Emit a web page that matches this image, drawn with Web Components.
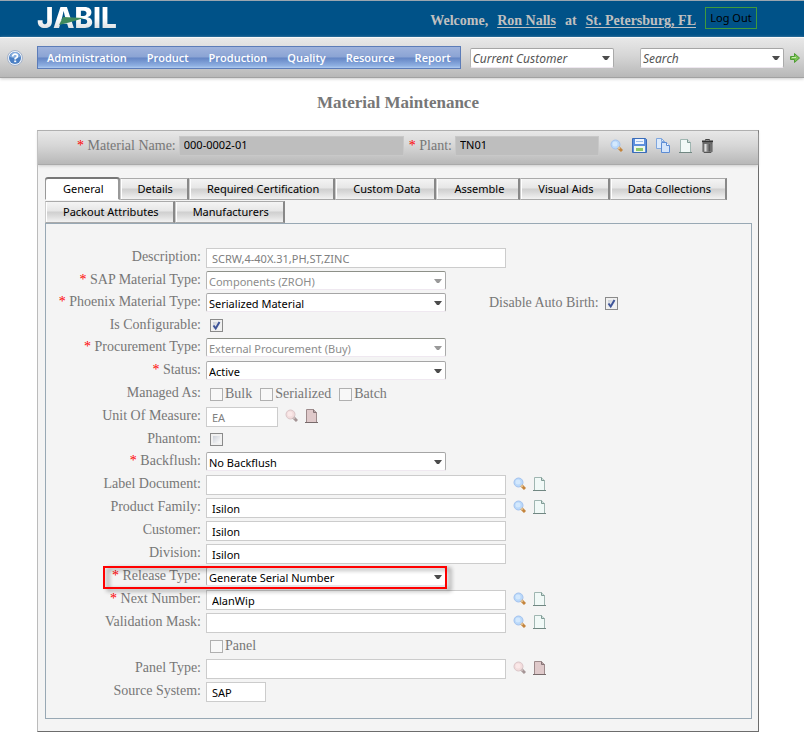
<!DOCTYPE html>
<html lang="en">
<head>
<meta charset="utf-8">
<title>Material Maintenance</title>
<style>
  body {
    margin: 0;
    background: #fff;
    color: #777;
    font: 14px/20px "Liberation Serif", serif;
    --ui: "Noto Sans", sans-serif;
    --bar: linear-gradient(#e8e8e8, #d6d6d6 45%, #b8b8b8);
  }
</style>
</head>
<body>
<material-page></material-page>

<script>
const ICONS = {
  search: `<circle cx="5.5" cy="5.5" r="4.5" fill="#b9d8fa" stroke="#a3c2ee"/><circle cx="5" cy="5" r="2.5" fill="#d3e8fd"/><path d="M8.5 8.5l3.500 3.500" stroke="#c4843c" stroke-width="3"/><path d="M8.200 8.200l1.500 1.500" stroke="#e4c79a" stroke-width="2"/>`,
  searchoff: `<circle cx="5.500" cy="5.500" r="4.500" fill="#f2dcdc" stroke="#dac5c8"/><circle cx="5" cy="5" r="2.500" fill="#fae8e8"/><path d="M8.500 8.500l3.500 3.500" stroke="#a59596" stroke-width="3"/><path d="M8.200 8.200l1.500 1.500" stroke="#d0c2c2" stroke-width="2"/>`,
  page: `<path d="M1.500 .5h7l3 3v10h-10z" fill="#f1f9f7" stroke="#9fb6b1"/><path d="M8.500 .5v3h3" fill="#cfe0dc" stroke="#7f9a94"/><path d="M0 13.500h13" stroke="#718782"/>`,
  pageoff: `<path d="M1.500 .5h7l3 3v10h-10z" fill="#dfc9ca" stroke="#9d8a8b"/><path d="M8.500 .5v3h3" fill="#b9a5a6" stroke="#857476"/><path d="M0 13.500h13" stroke="#776a6b"/>`,
  save: `<path d="M.5 .5h13l1 1v13h-14z" fill="#5d8fdc" stroke="#3a6cb8"/><path d="M3 1h9v5H3z" fill="#eef5ff"/><path d="M4 3.500h7" stroke="#9dbde8"/><path d="M2 8h11v6H2z" fill="#eef6ea"/><path d="M4 10h7v3H4z" fill="#8dc76a"/>`,
  copy: `<path d="M.5 .5h5l3 3v7h-8z" fill="#dceafb" stroke="#7fa6de"/><path d="M5.500 .5v3h3" fill="none" stroke="#7fa6de"/><path d="M5.500 4.500h5l3 3v7h-8z" fill="#d3e4fa" stroke="#5c8cd4"/><path d="M10.500 4.500v3h3" fill="#fff" stroke="#5c8cd4"/>`,
  trash: `<path d="M2 4h9v8.500l-1 1H3l-1-1z" fill="#888" stroke="#555"/><path d="M4.500 5v7.500" stroke="#ddd" stroke-width="2"/><path d="M8.500 5v7.500" stroke="#555" stroke-width="2"/><path d="M1 2.500h11" stroke="#333" stroke-width="2"/><path d="M4.500 1.500v-1h4v1" fill="none" stroke="#444"/>`,
  help: `<circle cx="8" cy="8" r="7.500" fill="#eef2f8" stroke="#a3b2ca"/><circle cx="8" cy="8" r="6" fill="#4a7fc4"/><path d="M3 7a5 5 0 0 1 10 0q-5 2-10 0" fill="#86aee0"/><path d="M5.700 6.500q0-2.300 2.400-2.300t2.300 2q0 1.300-2.200 2.300v1" fill="none" stroke="#fff" stroke-width="1.700"/><path d="M7.200 10.500h2v1.700h-2z" fill="#fff"/>`,
  go: `<path d="M.5 3.500h4v-3l5 4.500-5 4.500v-3h-4z" fill="#7cc455" stroke="#4f9c34"/><path d="M2 4.500h4" stroke="#c7ecb0"/>`
};
const SIZES = { save: [15, 15], copy: [14, 15], help: [16, 16], go: [10, 10] };
let nextId = 0;

function define(name, render) {
  customElements.define(name, class extends HTMLElement {
    connectedCallback() {
      if (this.shadowRoot) return;
      const t = document.createElement("template");
      t.innerHTML = render(this, k => this.getAttribute(k) || "", k => this.hasAttribute(k));
      this.attachShadow({ mode: "open" }).append(t.content.cloneNode(true));
    }
  });
}

const CHECK_CSS = `
  input[type=checkbox] { appearance: none; flex: none; box-sizing: border-box; width: 13px; height: 13px; margin: 0;
    border: 1px solid #8a8a8a; background: linear-gradient(135deg, #ccd0d8, #fafafa) content-box, #f0f0f0; padding: 2px; }
  input[type=checkbox]:disabled { border-color: #b0b0b0; background: #f8f8f8; }
  .box { display: grid; flex: none; }
  .box > * { grid-area: 1 / 1; }
  .box svg { pointer-events: none; z-index: 1; }`;
const checkBox = (id, on, off) => `<span class="box"><input type="checkbox" id="${id}" ${on ? "checked" : ""} ${off ? "disabled" : ""}>${on ? `<svg width="13" height="13" viewBox="0 0 13 13"><path d="M3.500 6.500l2.200 3 3.800-6.500" fill="none" stroke="#3f5599" stroke-width="2"/></svg>` : ""}</span>`;

const SELECT_CSS = `
  .combo { display: grid; box-sizing: border-box; height: 19px; background: #fff; align-items: center;
    border: 1px solid; border-color: #a5a5a5 #aaa #efe8f0 #b5b5b5; border-radius: 2px; }
  .combo > * { grid-area: 1 / 1; }
  .combo select, .combo input { appearance: none; border: 0; background: none; margin: 0; padding: 2px 18px 0 2px; height: 18px;
    width: 100%; min-width: 0; box-sizing: border-box; font: inherit; color: inherit; outline: 0; opacity: 1; }
  .combo svg { justify-self: end; margin-right: 3px; pointer-events: none; color: #4c4c4c; }`;
const ARROW = `<svg width="8" height="4" viewBox="0 0 8 4"><path d="M0 0h8L5 4H3z" fill="currentColor"/></svg>`;

define("icon-button", (el, a) => {
  const n = a("name"), [w, h] = SIZES[n] || [13, 14];
  return `<style>
    :host { display: inline-flex; flex: none; }
    button { display: flex; border: 0; padding: 0; margin: 0; background: none; }
    svg { display: block; }
  </style><button type="button" aria-label="${a("label")}"><svg width="${w}" height="${h}" viewBox="0 0 ${w} ${h}">${ICONS[n]}</svg></button>`;
});

define("check-field", (el, a, has) => {
  const id = "c" + nextId++;
  return `<style>
    :host { display: inline-flex; align-items: center; gap: 2px; height: 20px; }
    ${CHECK_CSS}
    :host([before]) { flex-direction: row-reverse; gap: 6px; }
  </style>${checkBox(id, has("checked"), has("disabled"))}<label for="${id}"><slot></slot></label>`;
});

define("top-combo", (el, a, has) => {
  const id = "t" + nextId++;
  return `<style>
    :host { display: block; flex: none; width: 144px; font: italic 12px/16px var(--ui); color: #555; }
    ${SELECT_CSS}
    .combo { height: 20px; }
    .combo input::placeholder { color: #555; opacity: 1; }
  </style><div class="combo">${has("search")
    ? `<input id="${id}" type="text" placeholder="${a("label")}" aria-label="${a("label")}">`
    : `<select id="${id}" aria-label="${a("label")}"><option>${a("label")}</option></select>`}${ARROW}</div>`;
});

define("form-row", (el, a, has) => {
  const id = "f" + nextId++, type = a("type"), off = has("disabled");
  let control = "";
  if (type === "text") control = `<input class="text ${a("size")}" id="${id}" type="text" value="${a("value")}" ${off ? "disabled" : ""}>`;
  if (type === "select") control = `<div class="combo"><select id="${id}" ${off ? "disabled" : ""}><option>${a("value")}</option></select>${ARROW}</div>`;
  if (type === "check") control = checkBox(id, has("checked"), off);
  const label = a("label") ? (type ? `<label for="${id}">${a("label")}:</label>` : `<span>${a("label")}:</span>`) : "";
  return `<style>
    :host { display: grid; grid-template-columns: 155px 1fr; column-gap: 5px; height: 23px; position: relative; }
    :host([compact]) { height: 22px; }
    .label { text-align: right; line-height: 22px; white-space: nowrap; }
    .label i { color: red; font-style: normal; }
    .field { display: flex; align-items: flex-start; padding-top: 2px; }
    ${SELECT_CSS}
    ${CHECK_CSS}
    .box { margin: 3px 0 0 4px; }
    .combo { width: 240px; font: 11px/16px var(--ui); color: #000; }
    :host([disabled]) .combo { color: #8c8c8c; border-top-color: #8d9088; }
    :host([disabled]) .combo svg { color: #999; }
    .text { box-sizing: border-box; width: 300px; height: 20px; margin: 0; padding: 0 5px; border: 1px solid #ccc; background: #fff;
      font: 11px/16px var(--ui); color: #000; }
    .text:disabled { color: #808080; }
    .text.s { width: 72px; } .text.xs { width: 60px; }
    ::slotted(icon-button) { margin: 2px 0 0 7px; }
    ::slotted(check-field[before]) { margin-left: 43px; }
    ::slotted(.group) { display: flex; gap: 8px; margin-left: 4px; }
    :host([highlight])::after { content: ""; position: absolute; left: 57px; top: 1px; box-sizing: border-box; width: 344px; height: 23px;
      border: 2px solid #f00; filter: drop-shadow(4px 2px 2px rgba(0,0,0,.45)); pointer-events: none; z-index: 2; }
  </style><div class="label">${has("required") ? "<i>*</i> " : ""}${label}</div><div class="field">${control}<slot></slot></div>`;
});

define("tab-item", (el, a, has) => `<style>
    :host { display: block; height: 22px; }
    button { box-sizing: border-box; height: 22px; margin: 0; padding: 0 14px 1px 17px; border: 1px solid; border-color: #aaa #888 #aaa #ccc; border-right-width: 2px;
      background: linear-gradient(#f4f4f4, #e6e6e6 45%, #cfcfcf 50%, #d8d8d8 65%, #f2f2f2); font: 11px/16px var(--ui); color: #000; white-space: nowrap;
      box-shadow: inset 1px 0 #fff; }
    :host([selected]) button { background: #fff; border-color: #777 #999 #fff #999; border-radius: 3px 3px 0 0; box-shadow: 0 -1px #777; }
  </style><button type="button" role="tab" aria-selected="${has("selected")}"><slot></slot></button>`);

define("tab-set", () => `<style>
    :host { display: block; padding: 13px 6px 12px 7px; }
    .tabs { display: flex; flex-wrap: wrap; row-gap: 1px; }
    .body { border: 1px solid #98a8b4; padding: 22px 0 15px; }
  </style><div class="tabs" role="tablist"><slot name="tab"></slot></div><div class="body"><slot></slot></div>`);

define("read-field", (el, a) => {
  const id = "r" + nextId++;
  return `<style>
    :host { display: flex; align-items: center; gap: 3px; }
    i { color: red; font-style: normal; }
    label { white-space: nowrap; }
    input { box-sizing: border-box; width: var(--w); height: 20px; margin: 0; padding: 0 4px 2px; border: 1px solid #c8c8c8; background: #bebebe;
      font: 11px/16px var(--ui); color: #000; }
  </style><label for="${id}"><i>*</i> ${a("label")}:</label><input id="${id}" type="text" readonly value="${a("value")}">`;
});

define("brand-logo", () => `<style>
    :host { display: block; position: relative; font: 800 28px/28px Inter, sans-serif; }
    b { font-weight: 800; background: linear-gradient(#fff 50%, #d4d8dc 90%); background-clip: text; color: transparent; }
    svg { position: absolute; left: 22px; top: 12px; }
  </style><b>JABIL</b><svg width="28" height="10" viewBox="0 0 28 10" aria-hidden="true"><path d="M0 9L4 1l21 1-13 4z" fill="#3f8a5c"/></svg>`);

define("site-header", () => `<style>
    :host { display: flex; align-items: flex-start; justify-content: space-between; box-sizing: border-box; height: 37px; padding: 3px 47px 0 37px;
      background: #005288; border-top: 1px solid #9aa6b0; }
    .user { display: flex; align-items: flex-start; gap: 9px; color: #c0c0c0; font-weight: bold; padding-top: 3px; }
    .user > span, a { line-height: 28px; white-space: nowrap; }
    a { color: inherit; text-underline-offset: 2px; }
    button { box-sizing: border-box; width: 52px; height: 22px; margin: 0; padding: 0; border: 1px solid #3f9a3c; background: none; font: 11px/16px var(--ui); color: #000; }
  </style><brand-logo></brand-logo>
  <div class="user"><span>Welcome,</span><a href="#user">Ron Nalls</a><span>at</span><a href="#site">St. Petersburg, FL</a><button type="button">Log Out</button></div>`);

define("main-nav", () => `<style>
    :host { display: flex; align-items: center; box-sizing: border-box; height: 41px; padding: 0 4px 0 7px; background: var(--bar);
      border-top: 1px solid #f8f8f8; border-bottom: 1px solid #a2a2a2; box-shadow: 0 1px 3px #ccc; }
    nav { display: flex; gap: 20px; box-sizing: border-box; height: 23px; margin: 0 9px 0 14px; padding: 0 9px; border: 1px solid #5c7cb8;
      background: linear-gradient(#9fb3dc, #8ba4d4 48%, #6485c4 52%, #8fb0e2 90%, #b0ccf0); }
    a { font: 600 11px/22px "Open Sans", sans-serif; color: #fff; text-decoration: none; white-space: nowrap; }
    .search { display: flex; align-items: center; gap: 6px; margin-left: auto; }
  </style><icon-button name="help" label="Help"></icon-button>
  <nav><a href="#admin">Administration</a><a href="#product">Product</a><a href="#production">Production</a><a href="#quality">Quality</a><a href="#resource">Resource</a><a href="#report">Report</a></nav>
  <top-combo label="Current Customer"></top-combo>
  <div class="search"><top-combo search label="Search"></top-combo><icon-button name="go" label="Go"></icon-button></div>`);

const lookups = (off = "") => `<icon-button name="search${off}" label="Find"></icon-button><icon-button name="page${off}" label="New"></icon-button>`;

define("material-page", () => `<style>
    :host { display: block; }
    h1 { margin: 14px 45px 17px 37px; font: bold 17px/21px "Liberation Serif", serif; text-align: center; }
    section { margin: 0 45px 4px 37px; background: #f4f4f4; border: 1px solid; border-color: #aaa #6c6c6c #6c6c6c #bbb; }
    .bar { display: flex; align-items: center; gap: 5px; box-sizing: border-box; height: 34px; padding: 0 44px 4px 39px; background: var(--bar);
      border-bottom: 1px solid #aaa; box-shadow: 0 1px 3px #ccc; }
    .name { --w: 225px; } .plant { --w: 144px; }
    .tools { display: flex; align-items: center; gap: 9px; margin-left: auto; }
  </style>
  <site-header></site-header>
  <main-nav></main-nav>
  <h1>Material Maintenance</h1>
  <section>
    <div class="bar">
      <read-field class="name" label="Material Name" value="000-0002-01"></read-field>
      <read-field class="plant" label="Plant" value="TN01"></read-field>
      <div class="tools"><icon-button name="search" label="Find"></icon-button><icon-button name="save" label="Save"></icon-button><icon-button name="copy" label="Copy"></icon-button><icon-button name="page" label="New"></icon-button><icon-button name="trash" label="Delete"></icon-button></div>
    </div>
    <tab-set>
      <tab-item slot="tab" selected>General</tab-item><tab-item slot="tab">Details</tab-item><tab-item slot="tab">Required Certification</tab-item><tab-item slot="tab">Custom Data</tab-item><tab-item slot="tab">Assemble</tab-item><tab-item slot="tab">Visual Aids</tab-item><tab-item slot="tab">Data Collections</tab-item><tab-item slot="tab">Packout Attributes</tab-item><tab-item slot="tab">Manufacturers</tab-item>
      <form-row label="Description" type="text" value="SCRW,4-40X.31,PH,ST,ZINC" disabled></form-row>
      <form-row label="SAP Material Type" required type="select" value="Components (ZROH)" disabled compact></form-row>
      <form-row label="Phoenix Material Type" required type="select" value="Serialized Material"><check-field before checked>Disable Auto Birth:</check-field></form-row>
      <form-row label="Is Configurable" type="check" checked compact></form-row>
      <form-row label="Procurement Type" required type="select" value="External Procurement (Buy)" disabled></form-row>
      <form-row label="Status" required type="select" value="Active"></form-row>
      <form-row label="Managed As"><div class="group" role="group" aria-label="Managed As"><check-field disabled>Bulk</check-field><check-field disabled>Serialized</check-field><check-field disabled>Batch</check-field></div></form-row>
      <form-row label="Unit Of Measure" type="text" size="s" value="EA" disabled>${lookups("off")}</form-row>
      <form-row label="Phantom" type="check" compact></form-row>
      <form-row label="Backflush" required type="select" value="No Backflush"></form-row>
      <form-row label="Label Document" type="text">${lookups()}</form-row>
      <form-row label="Product Family" type="text" value="Isilon">${lookups()}</form-row>
      <form-row label="Customer" type="text" value="Isilon"></form-row>
      <form-row label="Division" type="text" value="Isilon"></form-row>
      <form-row label="Release Type" required type="select" value="Generate Serial Number" highlight></form-row>
      <form-row label="Next Number" required type="text" value="AlanWip">${lookups()}</form-row>
      <form-row label="Validation Mask" type="text">${lookups()}</form-row>
      <form-row><div class="group"><check-field disabled>Panel</check-field></div></form-row>
      <form-row label="Panel Type" type="text">${lookups("off")}</form-row>
      <form-row label="Source System" type="text" size="xs" value="SAP"></form-row>
    </tab-set>
  </section>`);
</script>
</body>
</html>
